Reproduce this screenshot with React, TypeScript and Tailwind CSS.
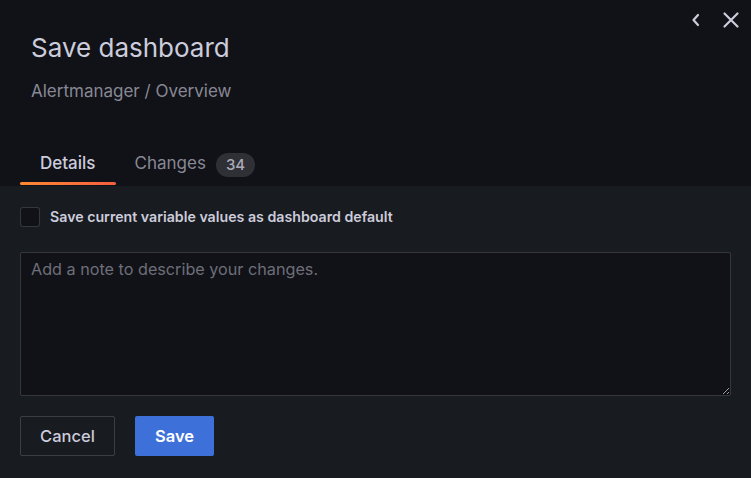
import React from "react";

export default function App() {
  return (
    <div className="w-[751px] h-[478px] bg-[#181b1f] flex flex-col text-[#ccccdc]" style={{ fontFamily: "Inter, 'Liberation Sans', sans-serif" }}>
      <div className="bg-[#111217] relative flex flex-col px-[20px] h-[186px]">
        <div className="absolute right-[11px] top-[11px] flex items-center gap-[21px]">
          <svg width="10" height="16" viewBox="0 0 10 16" fill="none" stroke="#ccccdc" strokeWidth="2.2" strokeLinecap="round" strokeLinejoin="round">
            <path d="M7 3 2.5 8 7 13" />
          </svg>
          <svg width="18" height="18" viewBox="0 0 18 18" fill="none" stroke="#ccccdc" strokeWidth="2.2" strokeLinecap="round">
            <path d="M2.5 2.5l13 13M15.5 2.5l-13 13" />
          </svg>
        </div>
        <div className="pl-[11px] pt-[32px] text-[26px] leading-[32px] text-[#ccccdc]">Save dashboard</div>
        <div className="pl-[11px] pt-[16px] text-[17px] leading-[22px] text-[rgba(204,204,220,0.65)]">Alertmanager / Overview</div>
        <div className="mt-auto flex items-end gap-[4px]">
          <div className="relative px-[20px] h-[44px] flex items-center text-[17px] font-medium text-[#ccccdc]">
            Details
            <div className="absolute left-0 right-0 bottom-[1px] h-[3px] rounded-[2px] bg-gradient-to-r from-[#ff8833] to-[#f55f3e]" />
          </div>
          <div className="px-[15px] h-[44px] flex items-center gap-[10px] text-[17px] text-[rgba(204,204,220,0.65)]">
            Changes
            <span className="bg-[#2f3036] text-[15px] font-medium text-[rgba(204,204,220,0.8)] rounded-full px-[10px] h-[24px] flex items-center mt-[2px]">34</span>
          </div>
        </div>
      </div>
      <div className="flex flex-col px-[20px] pt-[20px]">
        <label className="flex items-center gap-[10px]">
          <span className="w-[20px] h-[20px] rounded-[3px] border border-[rgba(204,204,220,0.2)] bg-[#111217]" />
          <span className="text-[14.2px] font-semibold text-[#ccccdc]">Save current variable values as dashboard default</span>
        </label>
        <textarea
          className="mt-[25px] w-[711px] h-[144px] bg-[#111217] border border-[rgba(204,204,220,0.2)] rounded-[2px] px-[10px] py-[4px] text-[16.2px] placeholder:text-[rgba(204,204,220,0.5)] outline-none"
          placeholder="Add a note to describe your changes."
        />
        <div className="mt-[20px] flex gap-[20px]">
          <button className="w-[95px] h-[40px] border border-[rgba(204,204,220,0.2)] rounded-[2px] text-[16.5px] font-medium text-[#ccccdc] bg-transparent">Cancel</button>
          <button className="w-[79px] h-[40px] rounded-[2px] bg-[#3d71d9] text-[16.5px] font-semibold text-white">Save</button>
        </div>
      </div>
    </div>
  );
}
